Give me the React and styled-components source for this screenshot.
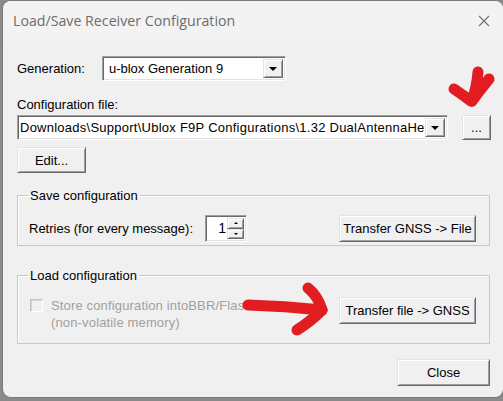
import React from 'react';
import styled, { createGlobalStyle } from 'styled-components';

const GlobalStyle = createGlobalStyle`
  html, body {
    margin: 0;
    padding: 0;
    background: #8a8a8a;
  }
  body {
    width: 503px;
    height: 401px;
    overflow: hidden;
  }
`;

const App = () => (
  <Page>
    <GlobalStyle />
    <Window>
      <TitleBar>
        <Title>Load/Save Receiver Configuration</Title>
        <CloseX>
          <svg width="12" height="12" viewBox="0 0 12 12">
            <path d="M1 1 L11 11 M11 1 L1 11" stroke="#6f6f6f" strokeWidth="1.1" />
          </svg>
        </CloseX>
      </TitleBar>

      <Client>
        <Row>
          <Label>Generation:</Label>
          <Combo width={184} left={17}>
            <ComboText>u-blox Generation 9</ComboText>
            <DropButton>
              <Triangle />
            </DropButton>
          </Combo>
        </Row>

        <FieldLabel>Configuration file:</FieldLabel>
        <Row>
          <Combo width={431}>
            <ComboText tight>
              Downloads\Support\Ublox F9P Configurations\1.32 DualAntennaHe
            </ComboText>
            <DropButton>
              <Triangle />
            </DropButton>
          </Combo>
          <Button width={29} height={25} left={14}>
            ...
          </Button>
        </Row>

        <Button width={69} height={26} top={7}>
          Edit...
        </Button>

        <Group top={15} height={58}>
          <Legend>Save configuration</Legend>
          <GroupRow>
            <Label>Retries (for every message):</Label>
            <Spinner>
              <SpinValue>1</SpinValue>
              <SpinButtons>
                <SpinButton>
                  <SmallTri up />
                </SpinButton>
                <SpinButton>
                  <SmallTri />
                </SpinButton>
              </SpinButtons>
            </Spinner>
            <Spacer />
            <Button width={137} height={27}>
              Transfer GNSS -&gt; File
            </Button>
          </GroupRow>
        </Group>

        <Group top={22} height={76}>
          <Legend>Load configuration</Legend>
          <GroupRow load>
            <CheckArea>
              <CheckBox />
              <DisabledText>
                Store configuration intoBBR/Flash
                <br />
                (non-volatile memory)
              </DisabledText>
            </CheckArea>
            <Spacer />
            <Button width={137} height={27}>
              Transfer file -&gt; GNSS
            </Button>
          </GroupRow>
        </Group>

        <BottomRow>
          <Button width={93} height={27}>
            Close
          </Button>
        </BottomRow>
      </Client>

      <Marks viewBox="0 0 500 396">
        <g
          fill="none"
          stroke="#e21d22"
          strokeLinecap="round"
          strokeLinejoin="round"
        >
          <g transform="translate(-3 -1)" strokeWidth="11">
            <path d="M478 72 Q477 86 472 101" />
            <path d="M454 89 Q463 95 471 101" />
            <path d="M489 79 Q480 90 472 101" />
          </g>
          <g transform="translate(-3 -1)" strokeWidth="11">
            <path d="M248 305 Q285 306 322 310" />
            <path d="M308 288 Q318 296 322 310" />
            <path d="M322 310 Q310 322 297 330" />
          </g>
        </g>
      </Marks>
    </Window>
  </Page>
);

export default App;

const Page = styled.div`
  width: 503px;
  height: 401px;
  padding: 1px 0 0 3px;
  box-sizing: border-box;
  background: #8a8a8a;
`;

const Window = styled.div`
  position: relative;
  width: 500px;
  height: 396px;
  border-radius: 8px;
  background: #f0f0f0;
  box-shadow: 0 0 0 1px #7a7a7a;
  overflow: hidden;
  font-family: 'Liberation Sans', Arial, sans-serif;
  font-size: 13px;
  color: #000;
`;

const TitleBar = styled.div`
  height: 40px;
  display: flex;
  align-items: center;
  justify-content: space-between;
  padding: 0 12px 0 10px;
  background: #f3f3f3;
`;

const Title = styled.div`
  font-family: 'Open Sans', 'Noto Sans', sans-serif;
  font-size: 14.2px;
  color: #6d6d6d;
  margin-top: -1px;
`;

const CloseX = styled.div`
  width: 14px;
  height: 14px;
  display: flex;
  align-items: center;
  justify-content: center;
`;

const Client = styled.div`
  display: flex;
  flex-direction: column;
  align-items: flex-start;
  padding: 15px 12px 0 14px;
`;

const Row = styled.div`
  display: flex;
  align-items: center;
`;

const Label = styled.span`
  white-space: nowrap;
`;

const FieldLabel = styled.div`
  margin-top: 16px;
  margin-bottom: 3px;
  line-height: 15px;
`;

const sunken = `
  border: 1px solid;
  border-color: #a0a0a0 #ffffff #ffffff #a0a0a0;
  box-shadow: inset 1px 1px 0 #696969, inset -1px -1px 0 #e3e3e3;
  background: #ffffff;
`;

const raised = `
  border: 1px solid;
  border-color: #e3e3e3 #696969 #696969 #e3e3e3;
  box-shadow: inset 1px 1px 0 #ffffff, inset -1px -1px 0 #a0a0a0;
  background: #f0f0f0;
`;

const Combo = styled.div`
  ${sunken}
  box-sizing: border-box;
  width: ${p => p.width}px;
  height: 25px;
  margin-left: ${p => (p.left ? p.left : 0)}px;
  display: flex;
  align-items: stretch;
  padding: 2px;
`;

const ComboText = styled.div`
  flex: 1;
  overflow: hidden;
  white-space: nowrap;
  line-height: 19px;
  padding-left: ${p => (p.tight ? 0 : 4)}px;
  letter-spacing: ${p => (p.tight ? 0.25 : 0)}px;
`;

const DropButton = styled.div`
  ${raised}
  width: 20px;
  flex: none;
  box-sizing: border-box;
  display: flex;
  align-items: center;
  justify-content: center;
`;

const Triangle = styled.div`
  width: 0;
  height: 0;
  border-left: 4px solid transparent;
  border-right: 4px solid transparent;
  border-top: 4px solid #000;
`;

const Button = styled.div`
  ${raised}
  box-sizing: border-box;
  width: ${p => p.width}px;
  height: ${p => p.height}px;
  margin-left: ${p => p.left || 0}px;
  margin-top: ${p => p.top || 0}px;
  display: flex;
  align-items: center;
  justify-content: center;
  flex: none;
  white-space: nowrap;
`;

const Group = styled.fieldset`
  box-sizing: border-box;
  width: 473px;
  height: ${p => p.height}px;
  margin: ${p => p.top}px 0 0 0;
  padding: 0 13px 0 11px;
  min-width: 0;
  border: 1px solid #c8c8c8;
  box-shadow: inset 1px 1px 0 #ffffff;
`;

const Legend = styled.legend`
  padding: 0 2px;
  margin-left: -1px;
  line-height: 15px;
`;

const GroupRow = styled.div`
  display: flex;
  align-items: ${p => (p.load ? 'flex-start' : 'center')};
  margin-top: ${p => (p.load ? 14 : 12)}px;
`;

const Spacer = styled.div`
  flex: 1;
`;

const Spinner = styled.div`
  ${sunken}
  box-sizing: border-box;
  width: 42px;
  height: 27px;
  margin-left: 12px;
  display: flex;
  padding: 2px;
`;

const SpinValue = styled.div`
  flex: 1;
  text-align: right;
  line-height: 21px;
  font-size: 14px;
  padding-right: 1px;
`;

const SpinButtons = styled.div`
  width: 17px;
  display: flex;
  flex-direction: column;
`;

const SpinButton = styled.div`
  ${raised}
  box-sizing: border-box;
  flex: 1;
  display: flex;
  align-items: center;
  justify-content: center;
`;

const SmallTri = styled.div`
  width: 0;
  height: 0;
  border-left: 2px solid transparent;
  border-right: 2px solid transparent;
  ${p =>
    p.up ? 'border-bottom: 2px solid #000;' : 'border-top: 2px solid #000;'}
`;

const CheckArea = styled.div`
  display: flex;
  align-items: flex-start;
  padding-left: 1px;
`;

const CheckBox = styled.div`
  width: 13px;
  height: 13px;
  box-sizing: border-box;
  border: 1px solid;
  border-color: #c0c0c0 #ffffff #ffffff #c0c0c0;
  box-shadow: inset 1px 1px 0 #d6d6d6;
  background: #f0f0f0;
  margin-top: 2px;
  flex: none;
`;

const DisabledText = styled.div`
  color: #a0a0a0;
  margin-left: 8px;
  line-height: 17px;
  letter-spacing: 0.15px;
`;

const BottomRow = styled.div`
  align-self: stretch;
  display: flex;
  justify-content: flex-end;
  margin-top: 15px;
  padding-right: 1px;
`;

const Marks = styled.svg`
  position: absolute;
  left: 0;
  top: 0;
  width: 500px;
  height: 396px;
  pointer-events: none;
`;
